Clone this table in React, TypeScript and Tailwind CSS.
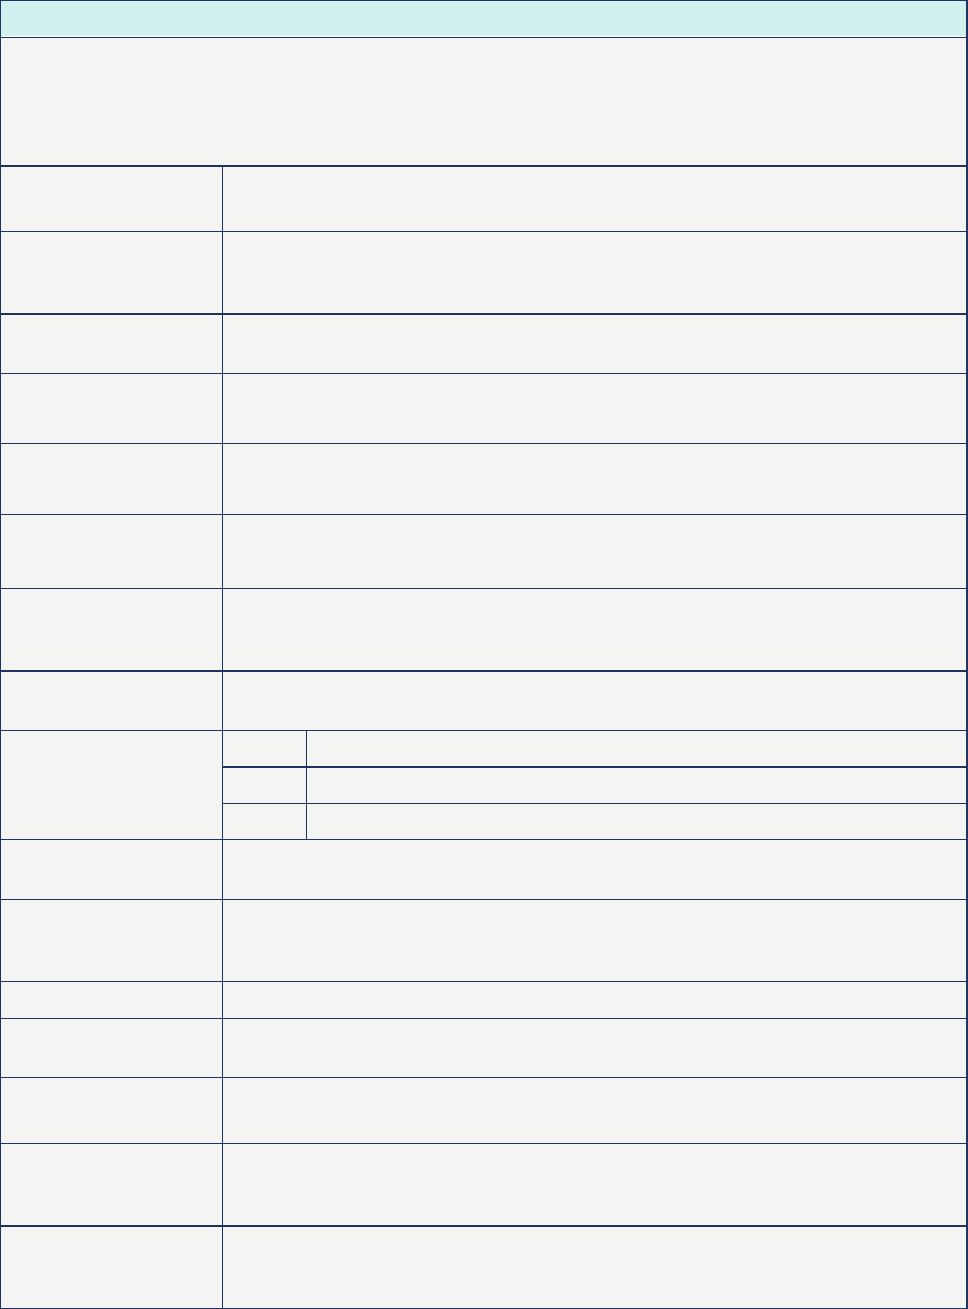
export default function App() {
  // row heights include the bottom border; thick = 2px line below
  const rows = [
    { h: "h-[65px]", thick: false },
    { h: "h-[83px]", thick: true },
    { h: "h-[59px]", thick: false },
    { h: "h-[70px]", thick: false },
    { h: "h-[71px]", thick: false },
    { h: "h-[74px]", thick: false },
    { h: "h-[83px]", thick: true },
    { h: "h-[59px]", thick: false },
  ]

  const rowsAfter = [
    { h: "h-[60px]", thick: false },
    { h: "h-[82px]", thick: false },
    { h: "h-[37px]", thick: false },
    { h: "h-[59px]", thick: false },
    { h: "h-[66px]", thick: false },
    { h: "h-[83px]", thick: true },
    { h: "h-[81px]", thick: false, last: true },
  ]

  const Row = ({ h, thick, last }: { h: string; thick: boolean; last?: boolean }) => (
    <div
      className={`flex ${h} ${last ? "" : thick ? "border-b-2" : "border-b"} border-[#1f3263]`}
    >
      <div className="w-[222px] shrink-0 border-r border-[#1f3263]" />
      <div className="flex-1" />
    </div>
  )

  return (
    <div className="w-[968px] h-[1309px] bg-[#f4f4f2] font-['Liberation_Sans',sans-serif]">
      <div className="flex flex-col w-[968px] border-t border-l border-b border-r-2 border-[#1f3263]">
        {/* Header */}
        <div className="h-[37px] flex flex-col border-b border-[#1f3263]">
          <div className="h-[35px] bg-[#d3f0f0]" />
          <div className="h-px bg-white" />
        </div>

        {/* Description row */}
        <div className="h-[129px] border-b-2 border-[#1f3263]" />

        {rows.map((r, i) => (
          <Row key={i} h={r.h} thick={r.thick} />
        ))}

        {/* Row with nested table */}
        <div className="flex h-[109px] border-b border-[#1f3263]">
          <div className="w-[222px] shrink-0 border-r border-[#1f3263]" />
          <div className="flex-1 flex flex-col">
            <div className="flex h-[37px] border-b-2 border-[#1f3263]">
              <div className="w-[84px] shrink-0 border-r border-[#1f3263]" />
              <div className="flex-1" />
            </div>
            <div className="flex h-[36px] border-b border-[#1f3263]">
              <div className="w-[84px] shrink-0 border-r border-[#1f3263]" />
              <div className="flex-1" />
            </div>
            <div className="flex flex-1">
              <div className="w-[84px] shrink-0 border-r border-[#1f3263]" />
              <div className="flex-1" />
            </div>
          </div>
        </div>

        {rowsAfter.map((r, i) => (
          <Row key={i} h={r.h} thick={r.thick} last={r.last} />
        ))}
      </div>
    </div>
  )
}
